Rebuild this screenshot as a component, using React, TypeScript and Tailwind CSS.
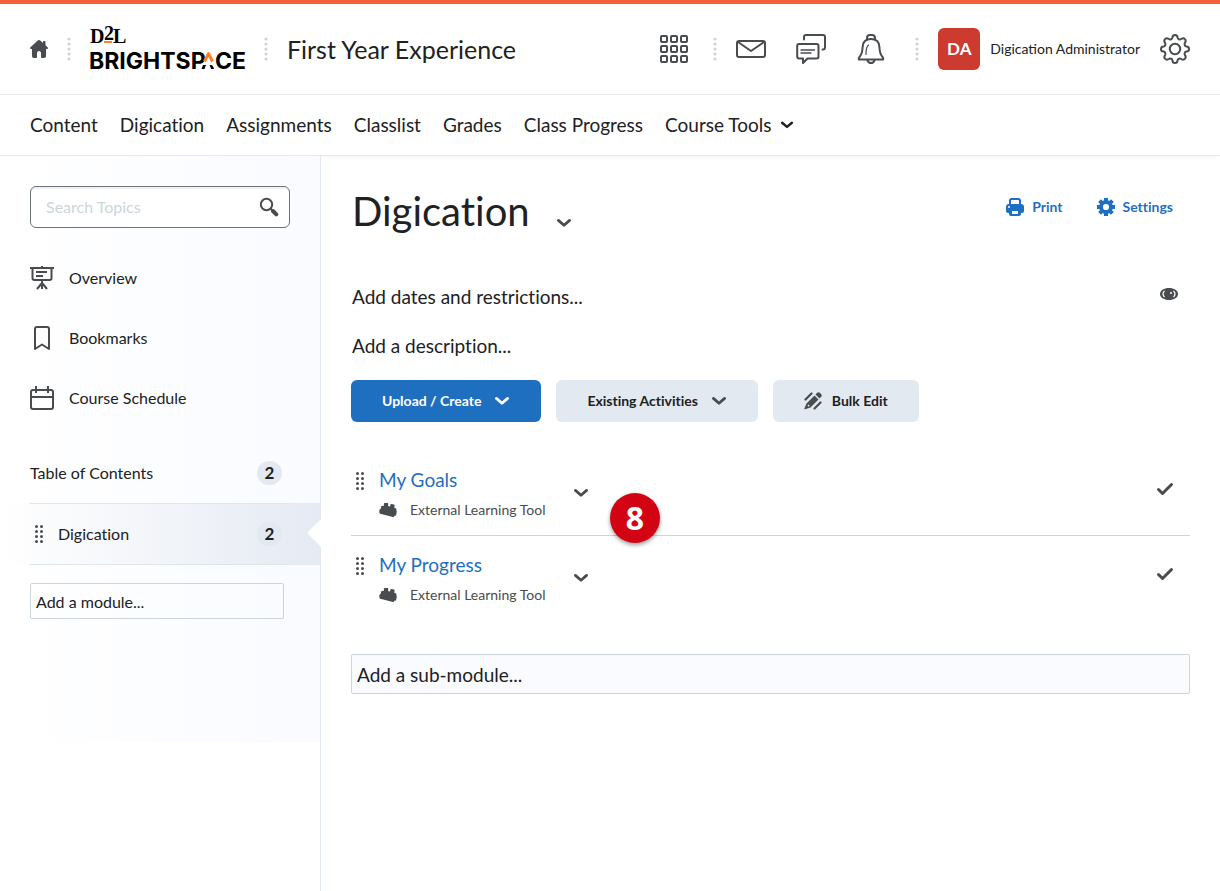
import type { ReactNode } from 'react';

const navLinks = ['Content', 'Digication', 'Assignments', 'Classlist', 'Grades', 'Class Progress'];

const topics = ['My Goals', 'My Progress'];

function Dots() {
  return (
    <svg width="4" height="24" viewBox="0 0 4 24" fill="#cdd5dc" aria-hidden="true">
      {[2, 7, 12, 17, 22].map((y) => (
        <circle key={y} cx="2" cy={y} r="1.6" />
      ))}
    </svg>
  );
}

function Chevron({ className = '', width = 16 }: { className?: string; width?: number }) {
  return (
    <svg className={className} width={width} height="10" viewBox="0 0 16 10" fill="none" stroke="currentColor" strokeWidth="2.8" strokeLinecap="round" strokeLinejoin="round" aria-hidden="true">
      <path d="M2.400 2.400 8 7.200l5.600-4.800" />
    </svg>
  );
}

function DragHandle() {
  return (
    <svg width="10" height="18" viewBox="0 0 10 18" fill="#494c4e" aria-hidden="true">
      {[1.5, 6.5, 11.5, 16.5].map((y) => (
        <g key={y}>
          <circle cx="2.500" cy={y} r="1.500" />
          <circle cx="7.500" cy={y} r="1.500" />
        </g>
      ))}
    </svg>
  );
}

function Logo() {
  return (
    <svg width="155" height="56" viewBox="0 0 155 56" className="overflow-visible" role="img" aria-label="D2L Brightspace">
      <g fill="#000" className="font-['Liberation_Serif'] text-[20px] font-bold">
        <text x="0" y="22">D</text>
        <text x="14" y="19">2</text>
        <text x="23" y="22">L</text>
      </g>
      <rect x="14" y="20" width="8" height="2" fill="#ff7e26" />
      <g fill="#000" className="font-['Inter'] text-[23px] font-bold">
        <text x="-1" y="48">BRIGHTSP</text>
        <text x="125" y="48">CE</text>
      </g>
      <path d="M114.500 40.500 118.500 32.500 122.500 40.500" fill="none" stroke="#ff7e26" strokeWidth="3" strokeLinejoin="round" />
      <path d="M111.500 48l1.500-4h3l-1.500 4zM119.500 44.500c2-1 3.500-.5 4.500 3.500h-3c-.3-1.500-.8-2.500-1.500-3.500z" />
    </svg>
  );
}

function IconHome() {
  return (
    <svg width="18" height="18" viewBox="0 0 18 18" fill="#494c4e" aria-hidden="true">
      <path d="M9 0c.5 0 .9.200 1.200.5L13 3V2c0-.6.400-1 1-1h.5c.6 0 1 .4 1 1v3.300l2.100 1.900c.8.800.3 1.800-.6 1.800h-1v7c0 1.200-.8 2-2 2h-2c-.6 0-1-.4-1-1v-4c0-1-.8-2-2-2s-2 1-2 2v4c0 .6-.4 1-1 1H4c-1.200 0-2-.8-2-2V9H1C.1 9-.4 8 .4 7.200L7.800.5C8.100.2 8.500 0 9 0z" />
    </svg>
  );
}

function IconApps() {
  return (
    <svg width="30" height="30" viewBox="0 0 30 30" fill="none" stroke="#494c4e" strokeWidth="2" aria-hidden="true">
      {[2, 12, 22].map((y) => [2, 12, 22].map((x) => <rect key={`${x}-${y}`} x={x} y={y} width="6" height="6" rx="1" />))}
    </svg>
  );
}

function IconMail() {
  return (
    <svg width="30" height="30" viewBox="0 0 30 30" fill="none" stroke="#494c4e" strokeWidth="2" strokeLinejoin="round" aria-hidden="true">
      <rect x="1" y="7" width="28" height="16" rx="2" />
      <path d="M2 8l13 9L28 8" />
    </svg>
  );
}

function IconChat() {
  return (
    <svg width="30" height="30" viewBox="0 0 30 30" fill="none" stroke="#494c4e" strokeWidth="2" strokeLinecap="round" strokeLinejoin="round" aria-hidden="true">
      <path d="M8 5.500V3a2 2 0 0 1 2-2h17a2 2 0 0 1 2 2v10.500a2 2 0 0 1-2 2h-.5" />
      <path d="M3 10h17.500a2 2 0 0 1 2 2v10.500a2 2 0 0 1-2 2H11.500L7 29v-4.500H3.200a2 2 0 0 1-2-2V12A2 2 0 0 1 3 10z" />
      <path d="M5 16h13.500M5 19h10" strokeWidth="1.300" />
    </svg>
  );
}

function IconBell() {
  return (
    <svg width="30" height="30" viewBox="0 0 30 30" fill="none" stroke="#494c4e" strokeWidth="2" strokeLinecap="round" strokeLinejoin="round" aria-hidden="true">
      <path d="M11 5.500V4a3 3 0 0 1 3-3h2a3 3 0 0 1 3 3v1.500" />
      <path d="M15 5C9.500 5 6.800 8.500 6.600 13c-.2 5.500-.9 7.500-2.800 9.500-.8.900-1.300 1.500-1 3h24.400c.3-1.500-.2-2.100-1-3-1.900-2-2.600-4-2.800-9.500C23.200 8.500 20.500 5 15 5z" />
      <path d="M11.500 26.500c.7 1.700 1.900 2.500 3.500 2.500s2.800-.8 3.500-2.500" />
      <path d="M12.500 11c-2 1.500-2.500 4-2.500 9.500" strokeWidth="1.200" />
    </svg>
  );
}

// eight-toothed outline gear
function IconGearOutline() {
  return (
    <svg width="30" height="30" viewBox="0 0 30 30" fill="none" stroke="#494c4e" strokeWidth="2" strokeLinejoin="round" aria-hidden="true">
      <path d="M12.500 3.500c0-1.500.7-2.500 2.500-2.500s2.500 1 2.500 2.500c.2 1.700 2.300 2.500 3.700 1.500 1.300-.9 2.500-1.100 3.700.1s1 2.400.1 3.700c-1 1.400-.2 3.500 1.500 3.700 1.500 0 2.500.7 2.500 2.500s-1 2.500-2.500 2.500c-1.700.2-2.500 2.300-1.500 3.700.9 1.300 1.100 2.500-.1 3.700s-2.400 1-3.700.1c-1.400-1-3.500-.2-3.700 1.500 0 1.500-.7 2.500-2.500 2.500s-2.500-1-2.500-2.500c-.2-1.700-2.300-2.500-3.700-1.500-1.300.9-2.500 1.100-3.700-.1s-1-2.400-.1-3.700c1-1.400.2-3.500-1.500-3.700C2 17.500 1 16.800 1 15s1-2.500 2.500-2.500c1.700-.2 2.500-2.300 1.500-3.700-.9-1.300-1.100-2.500.1-3.700s2.400-1 3.700-.1c1.400 1 3.500.2 3.700-1.500z" />
      <circle cx="15" cy="15" r="5.200" />
    </svg>
  );
}

function IconSearch() {
  return (
    <svg width="20" height="20" viewBox="0 0 20 20" fill="none" stroke="#494c4e" aria-hidden="true">
      <circle cx="7.500" cy="7.500" r="5.700" strokeWidth="2" />
      <path d="M11.500 11.500l3 3" strokeWidth="1.800" />
      <path d="M14 14l3.300 3.300" strokeWidth="4" strokeLinecap="round" />
    </svg>
  );
}

function IconOverview() {
  return (
    <svg width="24" height="24" viewBox="0 0 24 24" fill="none" stroke="#494c4e" strokeWidth="2" aria-hidden="true">
      <path d="M0 2h24M12 0v2M2.500 2v10a2 2 0 0 0 2 2h15a2 2 0 0 0 2-2V2M6 6h11M6 10h7M12 15v8M12 17l-5 6M12 17l5 6" />
    </svg>
  );
}

function IconBookmark() {
  return (
    <svg width="24" height="24" viewBox="0 0 24 24" fill="none" stroke="#494c4e" strokeWidth="2" strokeLinejoin="round" aria-hidden="true">
      <path d="M5 23V3a2 2 0 0 1 2-2h10a2 2 0 0 1 2 2v20l-7-4.500z" />
    </svg>
  );
}

function IconCalendar() {
  return (
    <svg width="24" height="24" viewBox="0 0 24 24" fill="none" stroke="#494c4e" strokeWidth="2" aria-hidden="true">
      <rect x="1" y="4" width="22" height="19" rx="2" />
      <path d="M1 11h22M6 0v7M18 0v7" />
    </svg>
  );
}

function IconPrint() {
  return (
    <svg width="18" height="18" viewBox="0 0 18 18" fill="none" aria-hidden="true">
      <path d="M4 7V2.500A1.500 1.500 0 0 1 5.500 1h7A1.500 1.500 0 0 1 14 2.500V7" stroke="#1f6fc1" strokeWidth="2" />
      <path fill="#1f6fc1" fillRule="evenodd" d="M3 6h12a3 3 0 0 1 3 3v4a2 2 0 0 1-2 2h-1v1a2 2 0 0 1-2 2H5a2 2 0 0 1-2-2v-1H2a2 2 0 0 1-2-2V9a3 3 0 0 1 3-3zm3 7v3h6v-3zM3 8a1 1 0 1 0 0 2 1 1 0 0 0 0-2z" />
    </svg>
  );
}

function IconGear() {
  return (
    <svg width="18" height="18" viewBox="0 0 18 18" fill="none" stroke="#1f6fc1" aria-hidden="true">
      <circle cx="9" cy="9" r="5" strokeWidth="3.800" />
      <path d="M9 0v3M9 15v3M0 9h3M15 9h3M2.600 2.600l2.200 2.200M13.200 13.200l2.200 2.200M2.600 15.400l2.200-2.200M13.200 4.800l2.200-2.200" strokeWidth="4" />
    </svg>
  );
}

function IconEye() {
  return (
    <svg width="18" height="12" viewBox="0 0 18 12" aria-hidden="true">
      <path fill="#494c4e" d="M9 0c5 0 9 2.500 9 6s-4 6-9 6-9-2.500-9-6 4-6 9-6z" />
      <path d="M4.500 3C2.500 5 2.500 7 4.500 9M13.500 3c2 2 2 4 0 6" stroke="#fff" strokeWidth="1.200" fill="none" />
      <circle cx="11" cy="5" r="1" fill="#fff" />
    </svg>
  );
}

function IconBulkEdit() {
  return (
    <svg width="18" height="18" viewBox="0 0 18 18" fill="#494c4e" aria-hidden="true">
      <path d="M10.500 3.500l4 4-8 8L1.200 17.300c-.6.200-1-.2-.8-.8L2.500 11.500zM11.500 2.500l1.700-1.700c.8-.8 1.800-.8 2.600 0l1.400 1.400c.8.800.8 1.800 0 2.600l-1.700 1.700z" />
      <path d="M1.500 7.500 7.500 1.500M10.500 16.500l6-6" stroke="#494c4e" strokeWidth="2.200" strokeLinecap="round" />
      <path d="M4 13l1.200 1.200" stroke="#e3e9f1" strokeWidth="1.500" />
    </svg>
  );
}

function IconBrick() {
  return (
    <svg width="18" height="16" viewBox="0 0 18 16" fill="#494c4e" aria-hidden="true">
      <path d="M.8 7.500 2 6.200V5c0-.5.400-.9 1-1l1.500-.2.400.3V2c0-.6.500-1 1.200-1h2.200c.7 0 1.100.4 1 1l-.3 2 2 .6.500-2c.1-.5.500-.8 1.100-.7l2.200.5c.6.100.9.500.8 1.100l-.3 2.300 1.300.4c.6.200.9.600.9 1.100l-.2 1.200.5.700-.6 3.800c0 .4-.3.600-.7.600l-1 .1-.6 1c-.2.400-.6.500-1 .4L1.200 11.800c-.5-.2-.8-.5-.8-1l-.1-2.300c0-.4.200-.8.500-1z" />
    </svg>
  );
}

function IconCheck() {
  return (
    <svg width="18" height="14" viewBox="0 0 18 14" fill="none" stroke="#494c4e" strokeWidth="3" strokeLinecap="round" strokeLinejoin="round" aria-label="Completed">
      <path d="M2.500 7.500l4 4L15.500 2.500" />
    </svg>
  );
}

function Count({ value }: { value: number }) {
  return (
    <span className="ml-auto flex h-6 w-[25px] items-center justify-center rounded-full bg-[#e3e9f1] text-[17px] leading-5 font-bold">{value}</span>
  );
}

function SideLink({ icon, label }: { icon: ReactNode; label: string }) {
  return (
    <li>
      <a href="#" className="flex h-[60px] items-center gap-[15px]">
        {icon}
        {label}
      </a>
    </li>
  );
}

function Topic({ title }: { title: string }) {
  return (
    <li className="flex h-[85px] items-center border-b border-[#cdd5dc] pr-4 last:border-transparent">
      <div className="w-7 pb-6 pl-1">
        <DragHandle />
      </div>
      <div className="w-[194px] pt-1">
        <a href="#" className="block text-[19px] leading-[30px] text-[#1f6fc1]">{title}</a>
        <p className="flex items-center gap-[13px] text-[14px] leading-[30px] text-[#494c4e]">
          <IconBrick />
          External Learning Tool
        </p>
      </div>
      <button type="button" aria-label={`Actions for ${title}`} className="text-[#494c4e]">
        <Chevron />
      </button>
      <div className="ml-auto pb-2">
        <IconCheck />
      </div>
    </li>
  );
}

export default function App() {
  return (
    <div className="flex min-h-screen flex-col bg-white font-['Lato',sans-serif] text-[16px] text-[#202122] [font-variant-ligatures:none]">
      <header className="border-t-4 border-[#f55e3b]">
        <div className="flex h-[91px] items-center border-b border-[#e6eaf0] px-[30px]">
          <div className="flex items-center gap-[19px]">
            <a href="#" aria-label="My Home"><IconHome /></a>
            <Dots />
            <a href="#"><Logo /></a>
            <Dots />
            <a href="#" className="text-[25px] leading-[30px]">First Year Experience</a>
          </div>
          <div className="ml-auto flex items-center gap-[19px]">
            <button type="button" aria-label="Select a course" className="mr-[5px]"><IconApps /></button>
            <Dots />
            <div className="mr-[10px] flex gap-[30px]">
              <button type="button" aria-label="Messages"><IconMail /></button>
              <button type="button" aria-label="Subscriptions"><IconChat /></button>
              <button type="button" aria-label="Notifications"><IconBell /></button>
            </div>
            <Dots />
            <div className="flex items-center gap-5">
              <button type="button" className="flex items-center gap-[10px] text-[14px] leading-5 [font-variant-ligatures:normal]">
                <span className="flex size-[42px] items-center justify-center rounded-md bg-[#cd3a2f] text-[17px] font-bold text-white">DA</span>
                Digication Administrator
              </button>
              <button type="button" aria-label="Admin Tools"><IconGearOutline /></button>
            </div>
          </div>
        </div>
        <nav className="flex h-[61px] items-center gap-[22px] border-b border-[#e6eaf0] px-[30px] text-[19px] leading-[30px] shadow-[0_2px_4px_rgba(0,0,0,0.03)]">
          {navLinks.map((link) => (
            <a key={link} href="#">{link}</a>
          ))}
          <button type="button" className="flex items-center gap-2">
            Course Tools
            <Chevron width={14} />
          </button>
        </nav>
      </header>

      <div className="flex grow">
        <aside className="w-[321px] shrink-0 border-r border-[#e3e9f1]">
          <div className="bg-linear-to-r from-white to-[#f9fbff] pt-[30px] pb-[123px]">
            <div className="mx-[30px] flex h-[42px] items-center rounded-md border border-[#6e7376] bg-white px-[10px] shadow-[inset_0_2px_0_0_#eef2f6]">
              <input type="text" aria-label="Search Topics" placeholder="Search Topics" className="min-w-0 grow px-[5px] outline-none placeholder:text-[#cdd5dc]" />
              <button type="button" aria-label="Search"><IconSearch /></button>
            </div>

            <ul className="mt-5 px-[30px]">
              <SideLink icon={<IconOverview />} label="Overview" />
              <SideLink icon={<IconBookmark />} label="Bookmarks" />
              <SideLink icon={<IconCalendar />} label="Course Schedule" />
            </ul>

            <a href="#" className="mt-[15px] mr-[38px] ml-[30px] flex h-[60px] items-center">
              Table of Contents
              <Count value={2} />
            </a>
            <div className="relative bg-linear-to-r from-white to-[#e5eaf3]">
              <a href="#" className="mx-[30px] flex h-[62px] items-center border-y border-[#e0e6ee] pr-2 pl-1">
                <DragHandle />
                <span className="ml-[14px]">Digication</span>
                <Count value={2} />
              </a>
              <svg className="absolute top-4 -right-px" width="14" height="28" viewBox="0 0 14 28" aria-hidden="true">
                <path d="M14 0 0 14l14 14z" fill="#fff" />
              </svg>
            </div>
            <input type="text" aria-label="Add a module" placeholder="Add a module..." className="mt-[18px] ml-[30px] h-9 w-[254px] rounded-xs border border-[#cdd5dc] px-[5px] outline-none placeholder:text-[#202122]" />
          </div>
        </aside>

        <main className="min-w-0 grow px-[30px] pt-[30px]">
          <div className="flex h-[50px] items-center pl-px">
            <h1 className="text-[40px] leading-[50px]">Digication</h1>
            <button type="button" aria-label="Module actions" className="ml-[26px] pt-6"><Chevron className="text-[#494c4e]" /></button>
            <div className="mr-[17px] mb-2 ml-auto flex gap-[34px] text-[14px] leading-5 font-bold text-[#1f6fc1]">
              <button type="button" className="flex items-center gap-2"><IconPrint />Print</button>
              <button type="button" className="flex items-center gap-2"><IconGear />Settings</button>
            </div>
          </div>

          <div className="mt-[46px] flex justify-between pr-3 pl-px text-[19px] leading-[30px]">
            <button type="button">Add dates and restrictions...</button>
            <button type="button" aria-label="Visibility" className="pb-[6px]"><IconEye /></button>
          </div>
          <button type="button" className="mt-[19px] block pl-px text-[19px] leading-[30px]">Add a description...</button>

          <div className="mt-[19px] flex gap-[15px] text-[14px] leading-5 font-bold">
            <button type="button" className="flex h-[42px] items-center gap-[13px] rounded-md bg-[#1f6fc1] px-[31px] text-white">
              Upload / Create
              <Chevron />
            </button>
            <button type="button" className="flex h-[42px] items-center gap-[13px] rounded-md bg-[#e3e9f1] px-[31px]">
              Existing Activities
              <Chevron className="text-[#494c4e]" />
            </button>
            <button type="button" className="flex h-[42px] items-center gap-[10px] rounded-md bg-[#e3e9f1] px-[31px]">
              <IconBulkEdit />
              Bulk Edit
            </button>
          </div>

          <div className="relative mt-[29px]">
            <ul>
              {topics.map((title) => (
                <Topic key={title} title={title} />
              ))}
            </ul>
            <span className="absolute top-[42px] left-[259px] flex size-[50px] items-center justify-center rounded-full bg-[#d20413] font-['Noto_Sans',sans-serif] text-[32px] font-bold text-white shadow-[0_2px_4px_rgba(0,0,0,0.4)]">8</span>
          </div>

          <input type="text" aria-label="Add a sub-module" placeholder="Add a sub-module..." className="mt-[33px] h-10 w-full rounded-xs border border-[#cdd5dc] bg-[#f9fbff] px-[5px] text-[19px] leading-[30px] outline-none placeholder:text-[#202122]" />
        </main>
      </div>
    </div>
  );
}
